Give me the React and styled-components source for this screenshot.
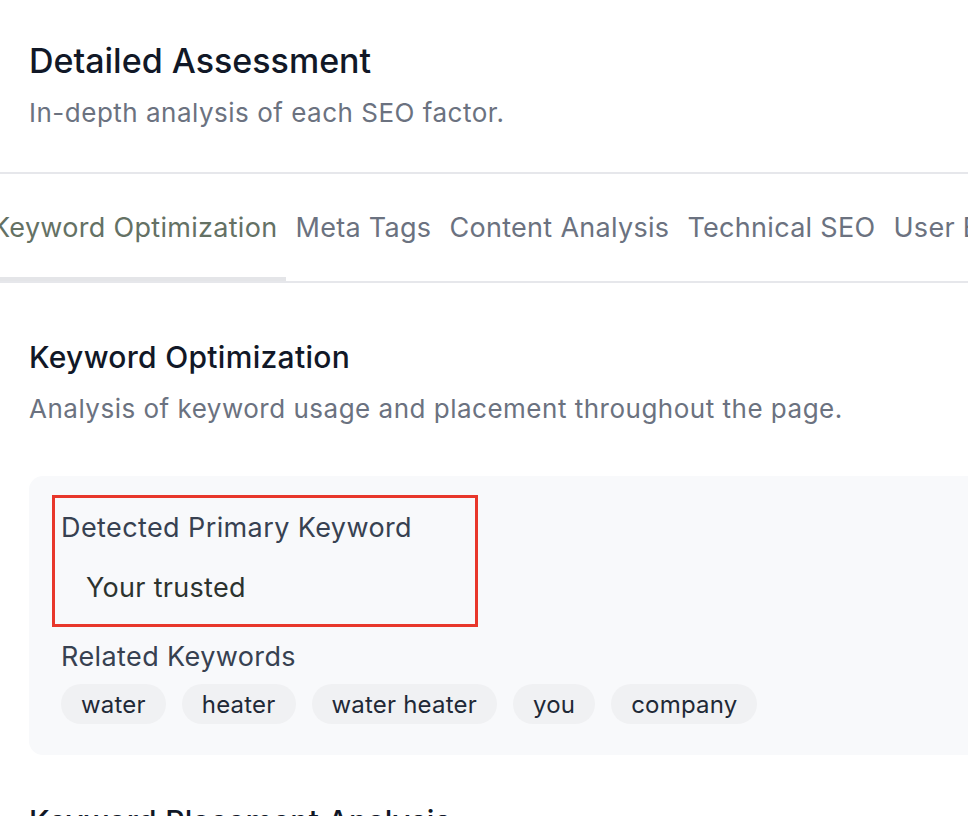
import styled, { createGlobalStyle } from "styled-components"

const GlobalStyle = createGlobalStyle`
    html, body {
        margin: 0;
        padding: 0;
        background: #ffffff;
        overflow: hidden;
    }
    body {
        font-family: Inter, "Noto Sans", "Liberation Sans", sans-serif;
        -webkit-font-smoothing: antialiased;
    }
`

const Page = styled.div`
    width: 1120px;
    background: #ffffff;
`

const Header = styled.div`
    padding: 41px 29px 0;
`

const Title = styled.h2`
    margin: 0;
    font-size: 34px;
    line-height: 40px;
    font-weight: 500;
    color: #111827;
    letter-spacing: 0;
`

const Subtitle = styled.p`
    margin: ${(p) => p.$gap || "16px"} 0 0;
    font-size: 26px;
    line-height: 32px;
    letter-spacing: 0.5px;
    color: #6b7280;
`

const TabList = styled.div`
    margin-top: 43px;
    border-top: 2px solid #e6e7eb;
    border-bottom: 2px solid #e6e7eb;
    overflow: hidden;
`

const TabTrack = styled.div`
    display: flex;
    align-items: stretch;
    margin-left: -17px;
    white-space: nowrap;
`

const Tab = styled.div`
    display: flex;
    align-items: center;
    height: 107px;
    padding: 0 9px;
    font-size: 27px;
    letter-spacing: 0.3px;
    color: ${(p) => (p.$active ? "#647164" : "#6b7280")};
    box-shadow: ${(p) => (p.$active ? "inset 0 -4px 0 #e4e5e8" : "none")};
`

const Content = styled.div`
    padding: 56px 29px 0;
`

const SectionTitle = styled.h3`
    margin: 0;
    font-size: 30px;
    line-height: 36px;
    font-weight: 500;
    letter-spacing: 0.3px;
    color: #111827;
`

const Panel = styled.div`
    margin-top: 51px;
    background: #f8f9fb;
    border-radius: 14px;
    padding: 34px 32px 31px;
`

const Primary = styled.div`
    position: relative;
`

const Highlight = styled.div`
    position: absolute;
    top: -15px;
    left: -9px;
    width: 426px;
    bottom: -21px;
    border: 3px solid #e8372b;
    box-sizing: border-box;
    pointer-events: none;
`

const Label = styled.div`
    margin-top: ${(p) => p.$top || "0"};
    font-size: 27px;
    line-height: 36px;
    letter-spacing: 0.4px;
    color: #374151;
`

const Keyword = styled.div`
    margin-top: 24px;
    padding-left: 25px;
    font-size: 27px;
    line-height: 36px;
    letter-spacing: 0.3px;
    color: #2c332f;
`

const Chips = styled.div`
    display: flex;
    flex-wrap: wrap;
    gap: 16px;
    margin-top: 9px;
`

const Chip = styled.span`
    display: inline-flex;
    align-items: center;
    height: 40px;
    padding: 0 20px;
    border-radius: 999px;
    background: #f0f1f3;
    font-size: 24px;
    letter-spacing: 0.2px;
    color: #1f2937;
`

const NextTitle = styled(SectionTitle)`
    margin-top: 48px;
`

const tabs = ["Keyword Optimization", "Meta Tags", "Content Analysis", "Technical SEO", "User Experience"]
const related = ["water", "heater", "water heater", "you", "company"]

export default function App() {
    return (
        <Page>
            <GlobalStyle />
            <Header>
                <Title>Detailed Assessment</Title>
                <Subtitle>In-depth analysis of each SEO factor.</Subtitle>
            </Header>
            <TabList>
                <TabTrack>
                    {tabs.map((t, i) => (
                        <Tab key={t} $active={i === 0}>{t}</Tab>
                    ))}
                </TabTrack>
            </TabList>
            <Content>
                <SectionTitle>Keyword Optimization</SectionTitle>
                <Subtitle $gap="18px">Analysis of keyword usage and placement throughout the page.</Subtitle>
                <Panel>
                    <Primary>
                        <Label>Detected Primary Keyword</Label>
                        <Keyword>Your trusted</Keyword>
                        <Highlight />
                    </Primary>
                    <Label $top="33px">Related Keywords</Label>
                    <Chips>
                        {related.map((k) => (
                            <Chip key={k}>{k}</Chip>
                        ))}
                    </Chips>
                </Panel>
                <NextTitle>Keyword Placement Analysis</NextTitle>
            </Content>
        </Page>
    )
}
